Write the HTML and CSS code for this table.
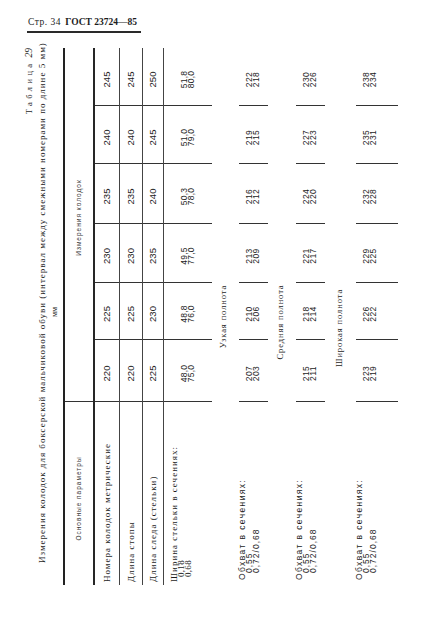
FILE: index.html
```html
<!DOCTYPE html>
<html lang="ru">
<head>
<meta charset="utf-8">
<title>ГОСТ 23724—85, стр. 34</title>
<link rel="stylesheet" href="styles.css">
</head>
<body>
<header class="runhead"><span class="page">Стр. 34</span> <b class="std">ГОСТ 23724—85</b></header>
<main class="stage">
  <section class="sheet">
    <div class="caption"><span class="tword">Таблица</span><span class="tnum">29</span></div>
    <h1 class="title">Измерения колодок для боксерской мальчиковой обуви (интервал между смежными номерами по длине 5 мм)</h1>
    <div class="unit">мм</div>

    <div class="table">
      <div class="hrow">
        <div class="hparam">Основные параметры</div>
        <div class="hdata">Измерения колодок</div>
      </div>

      <div class="row r1">
        <div class="lab">Номера колодок метрические</div>
        <div class="val">220</div><div class="val">225</div><div class="val">230</div>
        <div class="val">235</div><div class="val">240</div><div class="val last">245</div>
      </div>
      <div class="row r2">
        <div class="lab">Длина стопы</div>
        <div class="val">220</div><div class="val">225</div><div class="val">230</div>
        <div class="val">235</div><div class="val">240</div><div class="val last">245</div>
      </div>
      <div class="row r3">
        <div class="lab">Длина следа (стельки)</div>
        <div class="val">225</div><div class="val">230</div><div class="val">235</div>
        <div class="val">240</div><div class="val">245</div><div class="val last">250</div>
      </div>
      <div class="row r4">
        <div class="lab"><span class="ln">Ширина стельки в сечениях:</span><span class="ln sub">0,18</span><span class="ln sub">0,68</span></div>
        <div class="val pair"><span>48,0</span><span>75,0</span></div>
        <div class="val pair"><span>48,8</span><span>76,0</span></div>
        <div class="val pair"><span>49,5</span><span>77,0</span></div>
        <div class="val pair"><span>50,3</span><span>78,0</span></div>
        <div class="val pair"><span>51,0</span><span>79,0</span></div>
        <div class="val pair last"><span>51,8</span><span>80,0</span></div>
      </div>
    </div>

    <div class="band b1">Узкая полнота</div>
    <div class="lrow l1">
      <div class="lab"><span class="ln">Обхват в сечениях:</span><span class="ln sub">0,55</span><span class="ln sub">0,72/0,68</span></div>
      <div class="val"><span>207</span><span>203</span></div>
      <div class="val"><span>210</span><span>206</span></div>
      <div class="val"><span>213</span><span>209</span></div>
      <div class="val"><span>216</span><span>212</span></div>
      <div class="val"><span>219</span><span>215</span></div>
      <div class="val last"><span>222</span><span>218</span></div>
    </div>

    <div class="band b2">Средняя полнота</div>
    <div class="lrow l2">
      <div class="lab"><span class="ln">Обхват в сечениях:</span><span class="ln sub">0,55</span><span class="ln sub">0,72/0,68</span></div>
      <div class="val"><span>215</span><span>211</span></div>
      <div class="val"><span>218</span><span>214</span></div>
      <div class="val"><span>221</span><span>217</span></div>
      <div class="val"><span>224</span><span>220</span></div>
      <div class="val"><span>227</span><span>223</span></div>
      <div class="val last"><span>230</span><span>226</span></div>
    </div>

    <div class="band b3">Широкая полнота</div>
    <div class="lrow l3">
      <div class="lab"><span class="ln">Обхват в сечениях:</span><span class="ln sub">0,55</span><span class="ln sub">0,72/0,68</span></div>
      <div class="val"><span>223</span><span>219</span></div>
      <div class="val"><span>226</span><span>222</span></div>
      <div class="val"><span>229</span><span>225</span></div>
      <div class="val"><span>232</span><span>228</span></div>
      <div class="val"><span>235</span><span>231</span></div>
      <div class="val last"><span>238</span><span>234</span></div>
    </div>
  </section>
</main>
</body>
</html>
```

FILE: styles.css
```css
* { box-sizing: border-box; }

html, body {
  margin: 0;
  padding: 0;
  background: #ffffff;
}

body {
  width: 427px;
  height: 623px;
  overflow: hidden;
  color: #1c1c1c;
  font-family: "Liberation Serif", "DejaVu Serif", serif;
}

/* running head */
.runhead {
  margin: 0 0 0 27px;
  width: 114px;
  padding: 16px 0 3px 1px;
  font-size: 9.5px;
  line-height: 12px;
  border-bottom: 2px solid #2a2a2a;
  white-space: nowrap;
}
.runhead .page { letter-spacing: 0.5px; margin-right: 2px; }
.runhead .std { font-weight: bold; }

/* rotated page body */
.stage {
  width: 400px;
  height: 560px;
  margin: 7px 0 0 20px;
}

.sheet {
  width: 560px;
  height: 400px;
  padding-top: 4px;
  transform-origin: 0 0;
  transform: translateY(560px) rotate(-90deg);
}

.caption {
  height: 10px;
  line-height: 10px;
  font-size: 8.5px;
  text-align: right;
  padding-right: 8px;
  white-space: nowrap;
}
.tword { letter-spacing: 3.4px; }
.tnum { font-size: 9.5px; font-style: italic; margin-left: 3px; }

.title {
  margin: 3px 0 0 37px;
  height: 10px;
  line-height: 10px;
  font-size: 9px;
  font-weight: normal;
  letter-spacing: 1px;
  white-space: nowrap;
}

.unit {
  margin: 3px 0 0 15px;
  width: 537px;
  height: 9px;
  line-height: 9px;
  font-size: 8px;
  text-align: center;
  padding-left: 9px;
}

/* table */
.table {
  margin: 4px 0 0 15px;
  width: 537px;
  border-top: 2px solid #222;
}

.hrow {
  display: grid;
  grid-template-columns: 184px 353px;
  height: 30px;
  border-bottom: 2px solid #262626;
  font-family: "Liberation Sans", Arial, sans-serif;
  font-size: 6.5px;
  letter-spacing: 1px;
  line-height: 28px;
  color: #333;
}
.hparam {
  border-right: 1px solid #333;
  text-align: center;
  padding-right: 10px;
}
.hdata {
  text-align: center;
  padding-left: 14px;
}

.row, .lrow {
  display: grid;
  grid-template-columns: 184px 62px 57px 59px 60px 58px 57px;
}

.row .lab {
  font-size: 9px;
  letter-spacing: 1px;
  padding-left: 3px;
  border-right: 1px solid #333;
  white-space: nowrap;
}
.row .val {
  text-align: center;
  padding-right: 6px;
  font-family: "Liberation Sans", Arial, sans-serif;
  font-size: 9.5px;
  border-right: 1px solid #333;
}
.val.last { border-right: 0; }

.r1 { height: 25px; border-bottom: 1px solid #444; }
.r2 { height: 23px; border-bottom: 1px solid #444; }
.r3 { height: 21px; border-bottom: 1px solid #444; }
.r1 .lab, .r1 .val { line-height: 24px; }
.r2 .lab, .r2 .val { line-height: 22px; }
.r3 .lab, .r3 .val { line-height: 20px; }

.r4 { height: 48px; }
.r4 .lab {
  padding-top: 7.4px;
  line-height: 7px;
}
.ln { display: block; }
.r4 .lab .sub { padding-left: 5px; letter-spacing: 0.3px; }
.r4 .val.pair {
  padding-top: 17px;
  font-size: 8.5px;
  line-height: 7px;
  letter-spacing: 0.2px;
}
.val span { display: block; }

/* fullness bands */
.band {
  margin-left: 15px;
  width: 537px;
  height: 10px;
  line-height: 10px;
  font-size: 8.5px;
  letter-spacing: 0.9px;
  text-align: center;
  white-space: nowrap;
}
.b1 { margin-top: 6px; }
.b2 { margin-top: 7px; padding-right: 11px; }
.b3 { margin-top: 9px; padding-right: 23px; }

.lrow {
  margin-left: 15px;
  width: 537px;
  font-family: "Liberation Sans", Arial, sans-serif;
  font-size: 8.5px;
  line-height: 7.2px;
}
.l1 { margin-top: 11px; height: 29px; }
.l2 { margin-top: 11px; height: 29px; }
.l3 { margin-top: 12px; height: 42px; }

.lrow .lab {
  padding-left: 5px;
  border-right: 1px solid #333;
  white-space: nowrap;
  letter-spacing: 1.4px;
}
.lrow .lab .sub { padding-left: 7px; letter-spacing: 1px; }
.lrow .val {
  padding-top: 7.2px;
  padding-right: 6px;
  text-align: center;
  letter-spacing: 0.4px;
  border-right: 1px solid #333;
}
.lrow .val.last { border-right: 0; }
```
